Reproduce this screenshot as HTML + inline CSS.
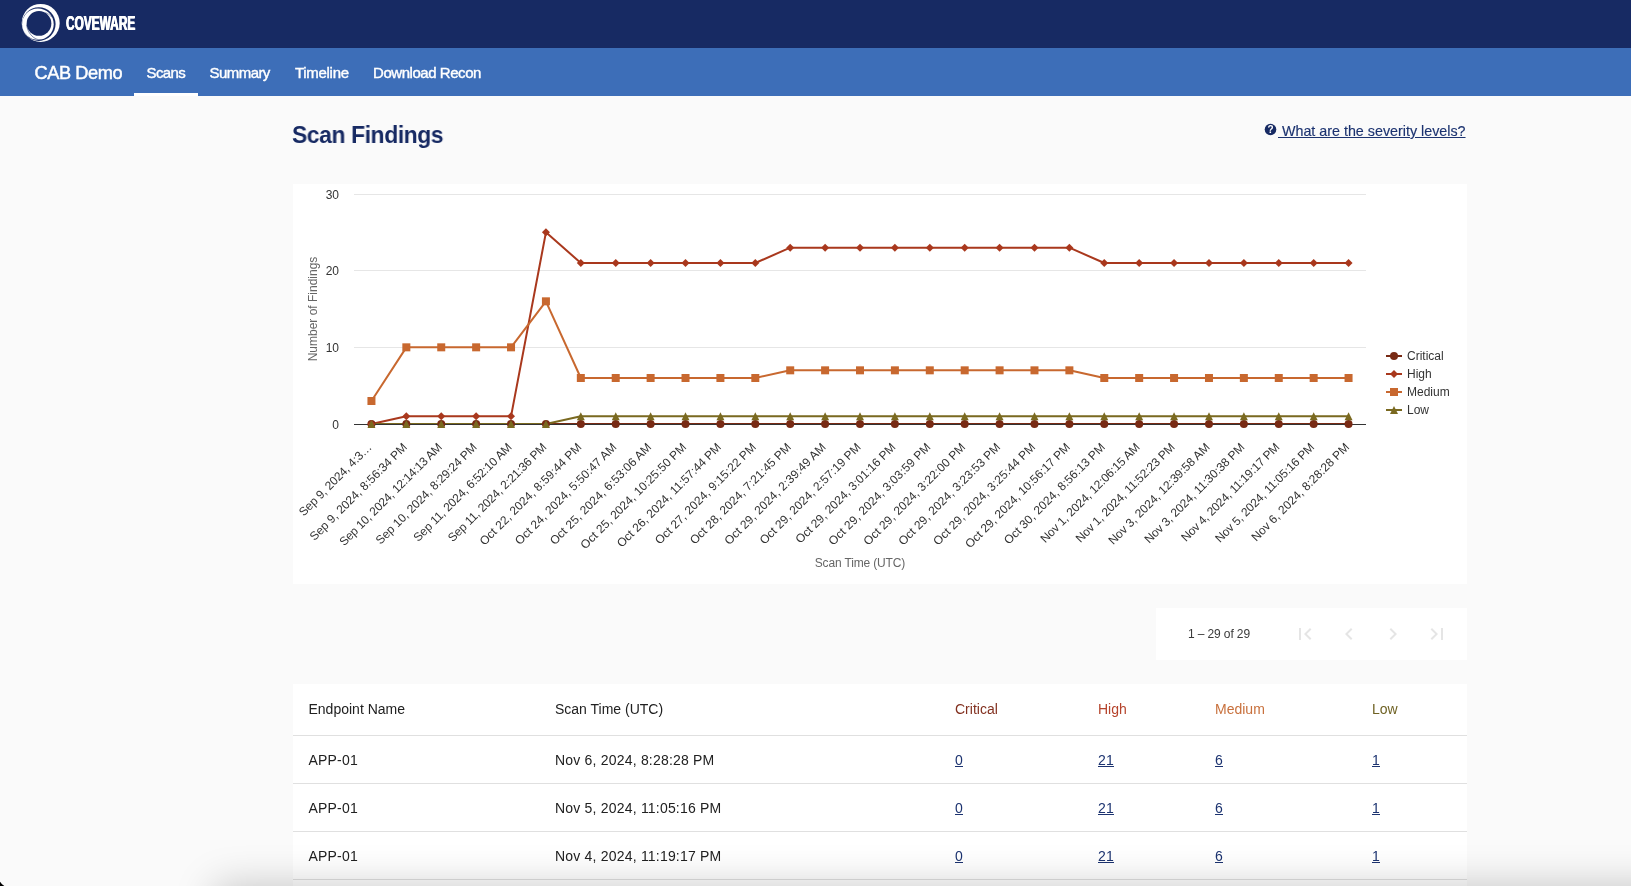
<!DOCTYPE html>
<html lang="en">
<head>
<meta charset="utf-8">
<title>Scan Findings</title>
<style>
html, body { margin: 0; padding: 0; }
body { width: 1631px; height: 886px; overflow: hidden; background: #fafafa; position: relative;
  font-family: "Liberation Sans", sans-serif; color: #212121; }
.app { position: absolute; left: 0; top: 0; width: 1631px; height: 886px; overflow: hidden; will-change: transform; transform: translateZ(0); }
.topbar { position: absolute; left: 0; top: 0; width: 1631px; height: 48px; background: #172a63; }
.logo { position: absolute; left: 0; top: 0; }
.wordmark { position: absolute; left: 65.9px; top: 14.0px; font-size: 16px; line-height: 16px; font-weight: bold; color: #fff; white-space: nowrap; transform: scale(0.742, 1.222); transform-origin: 0 0; text-shadow: 0.5px 0 0 #fff, -0.5px 0 0 #fff; }
.navbar { position: absolute; left: 0; top: 48px; width: 1631px; height: 48px; background: #3d6eb8; color: #fff; }
.navbar span { position: absolute; white-space: nowrap; }
.brand { left: 34.5px; top: 13.6px; font-size: 18.2px; line-height: 22px; letter-spacing: -0.4px; -webkit-text-stroke: 0.45px #fff; }
.tab { top: 15.8px; font-size: 15px; line-height: 18px; -webkit-text-stroke: 0.4px #fff; }
.ink { position: absolute; left: 134px; top: 45px; width: 64px; height: 3px; background: #fff; }
h1 { position: absolute; left: 292.3px; top: 119.5px; margin: 0; font-size: 23.6px; line-height: 30px; font-weight: bold; color: #172a63; white-space: nowrap; letter-spacing: -0.4px; transform: scaleX(0.969); transform-origin: 0 0; }
.help { position: absolute; left: 1264px; top: 122px; height: 18px; white-space: nowrap; font-size: 14.3px; line-height: 18px; color: #1c3370; }
.help svg { position: absolute; left: 0; top: 0.9px; }
.help a { position: absolute; left: 14px; top: 0; text-decoration: underline; white-space: pre; -webkit-text-stroke: 0.15px #1c3370; }
.chartbox { position: absolute; left: 293px; top: 184px; width: 1174px; height: 400px; background: #fff; }
.chart { position: absolute; left: 0; top: 0; font-family: "Liberation Sans", sans-serif; }
.chart text.ax { font-size: 12px; fill: #333333; }
.chart text.ttl { font-size: 12px; fill: #666666; }
.chart text.lg { font-size: 12px; fill: #333333; }
.pager { position: absolute; left: 1156px; top: 608px; width: 311px; height: 52px; background: #fff; }
.pager .rng { position: absolute; left: 32px; top: 19.3px; font-size: 12px; line-height: 14px; color: #3a3a3a; white-space: nowrap; letter-spacing: -0.12px; }
.pager svg { position: absolute; top: 14px; }
.table { position: absolute; left: 293px; top: 684px; width: 1174px; height: 210px; background: #fff; }
.th, .tr { position: absolute; left: 0; width: 1174px; border-bottom: 1px solid #e0e0e0; }
.th { top: 0; height: 51px; font-size: 14px; letter-spacing: 0; }
.tr { height: 47px; font-size: 14px; letter-spacing: 0.2px; }
.th span, .tr span { position: absolute; white-space: nowrap; line-height: 16px; }
.th span { top: 17px; }
.tr span { top: 16px; }
.c1 { left: 15.5px; } .c2 { left: 262px; } .c3 { left: 662px; } .c4 { left: 805px; } .c5 { left: 922px; } .c6 { left: 1079px; }
.tr a { color: #1c3370; text-decoration: underline; }
.shade { position: absolute; left: 215px; top: 886px; width: 1600px; height: 60px; box-shadow: 0 0 40px rgba(0,0,0,0.22); }
.corner { position: absolute; left: 0; top: 877px; width: 9px; height: 9px; background: radial-gradient(circle at 9px 0px, rgba(0,0,0,0) 9.6px, #000 10.4px); }
</style>
</head>
<body>
<div class="app">
<div class="topbar">
  <svg class="logo" width="160" height="48" viewBox="0 0 160 48">
    <circle cx="40.7" cy="22.9" r="19" fill="#fff"/>
    <circle cx="38.8" cy="24.1" r="16.8" fill="#172a63"/>
    <circle cx="37.9" cy="24.2" r="15.8" fill="#fff"/>
    <circle cx="39.0" cy="23.4" r="12.35" fill="#172a63"/>
    <path d="M26.6 24.6 C27.2 30.5 30.6 35.8 35.1 38.4 C37.2 39.5 39.3 40 41.6 40" fill="none" stroke="#172a63" stroke-width="0.55"/>
    <path d="M45.5 12.6 C48.2 13.6 50.4 15.3 52 17.4" fill="none" stroke="#172a63" stroke-width="0.45"/>
  </svg>
  <span class="wordmark">COVEWARE</span>
</div>
<div class="navbar">
  <span class="brand">CAB Demo</span>
  <span class="tab" style="left:146.5px;letter-spacing:-0.6px">Scans</span>
  <span class="tab" style="left:209.5px;letter-spacing:-0.55px">Summary</span>
  <span class="tab" style="left:295px;letter-spacing:-0.3px">Timeline</span>
  <span class="tab" style="left:373px;letter-spacing:-0.45px">Download Recon</span>
  <div class="ink"></div>
</div>
<h1>Scan Findings</h1>
<div class="help">
  <svg width="13" height="13" viewBox="0 0 13 13"><circle cx="6.5" cy="6.5" r="5.8" fill="#172a63"/><text x="6.5" y="10.1" text-anchor="middle" font-family="Liberation Sans, sans-serif" font-weight="bold" font-size="10" fill="#fff">?</text></svg>
  <a> What are the severity levels?</a>
</div>
<div class="chartbox">
<svg class="chart" width="1174" height="400" viewBox="0 0 1174 400">
<path d="M 61 163.5 L 1073 163.5" stroke="#e6e6e6" stroke-width="1" fill="none"/>
<path d="M 61 86.5 L 1073 86.5" stroke="#e6e6e6" stroke-width="1" fill="none"/>
<path d="M 61 10.5 L 1073 10.5" stroke="#e6e6e6" stroke-width="1" fill="none"/>
<path d="M 78.45 240.00 L 113.34 240.00 L 148.24 240.00 L 183.14 240.00 L 218.03 240.00 L 252.93 240.00 L 287.83 240.00 L 322.72 240.00 L 357.62 240.00 L 392.52 240.00 L 427.41 240.00 L 462.31 240.00 L 497.21 240.00 L 532.10 240.00 L 567.00 240.00 L 601.90 240.00 L 636.79 240.00 L 671.69 240.00 L 706.59 240.00 L 741.48 240.00 L 776.38 240.00 L 811.28 240.00 L 846.17 240.00 L 881.07 240.00 L 915.97 240.00 L 950.86 240.00 L 985.76 240.00 L 1020.66 240.00 L 1055.55 240.00" stroke="#782A14" stroke-width="2" fill="none" stroke-linejoin="round" stroke-linecap="round"/>
<path d="M 78.45 240.00 L 113.34 232.33 L 148.24 232.33 L 183.14 232.33 L 218.03 232.33 L 252.93 48.33 L 287.83 79.00 L 322.72 79.00 L 357.62 79.00 L 392.52 79.00 L 427.41 79.00 L 462.31 79.00 L 497.21 63.67 L 532.10 63.67 L 567.00 63.67 L 601.90 63.67 L 636.79 63.67 L 671.69 63.67 L 706.59 63.67 L 741.48 63.67 L 776.38 63.67 L 811.28 79.00 L 846.17 79.00 L 881.07 79.00 L 915.97 79.00 L 950.86 79.00 L 985.76 79.00 L 1020.66 79.00 L 1055.55 79.00" stroke="#A9381D" stroke-width="2" fill="none" stroke-linejoin="round" stroke-linecap="round"/>
<path d="M 78.45 217.00 L 113.34 163.33 L 148.24 163.33 L 183.14 163.33 L 218.03 163.33 L 252.93 117.33 L 287.83 194.00 L 322.72 194.00 L 357.62 194.00 L 392.52 194.00 L 427.41 194.00 L 462.31 194.00 L 497.21 186.33 L 532.10 186.33 L 567.00 186.33 L 601.90 186.33 L 636.79 186.33 L 671.69 186.33 L 706.59 186.33 L 741.48 186.33 L 776.38 186.33 L 811.28 194.00 L 846.17 194.00 L 881.07 194.00 L 915.97 194.00 L 950.86 194.00 L 985.76 194.00 L 1020.66 194.00 L 1055.55 194.00" stroke="#C8682F" stroke-width="2" fill="none" stroke-linejoin="round" stroke-linecap="round"/>
<path d="M 78.45 240.00 L 113.34 240.00 L 148.24 240.00 L 183.14 240.00 L 218.03 240.00 L 252.93 240.00 L 287.83 232.33 L 322.72 232.33 L 357.62 232.33 L 392.52 232.33 L 427.41 232.33 L 462.31 232.33 L 497.21 232.33 L 532.10 232.33 L 567.00 232.33 L 601.90 232.33 L 636.79 232.33 L 671.69 232.33 L 706.59 232.33 L 741.48 232.33 L 776.38 232.33 L 811.28 232.33 L 846.17 232.33 L 881.07 232.33 L 915.97 232.33 L 950.86 232.33 L 985.76 232.33 L 1020.66 232.33 L 1055.55 232.33" stroke="#7A6920" stroke-width="2" fill="none" stroke-linejoin="round" stroke-linecap="round"/>
<path d="M 61 240.5 L 1073 240.5" stroke="#333333" stroke-width="1" fill="none"/>
<g><circle cx="78.45" cy="240.00" r="4" fill="#782A14"/><circle cx="113.34" cy="240.00" r="4" fill="#782A14"/><circle cx="148.24" cy="240.00" r="4" fill="#782A14"/><circle cx="183.14" cy="240.00" r="4" fill="#782A14"/><circle cx="218.03" cy="240.00" r="4" fill="#782A14"/><circle cx="252.93" cy="240.00" r="4" fill="#782A14"/><circle cx="287.83" cy="240.00" r="4" fill="#782A14"/><circle cx="322.72" cy="240.00" r="4" fill="#782A14"/><circle cx="357.62" cy="240.00" r="4" fill="#782A14"/><circle cx="392.52" cy="240.00" r="4" fill="#782A14"/><circle cx="427.41" cy="240.00" r="4" fill="#782A14"/><circle cx="462.31" cy="240.00" r="4" fill="#782A14"/><circle cx="497.21" cy="240.00" r="4" fill="#782A14"/><circle cx="532.10" cy="240.00" r="4" fill="#782A14"/><circle cx="567.00" cy="240.00" r="4" fill="#782A14"/><circle cx="601.90" cy="240.00" r="4" fill="#782A14"/><circle cx="636.79" cy="240.00" r="4" fill="#782A14"/><circle cx="671.69" cy="240.00" r="4" fill="#782A14"/><circle cx="706.59" cy="240.00" r="4" fill="#782A14"/><circle cx="741.48" cy="240.00" r="4" fill="#782A14"/><circle cx="776.38" cy="240.00" r="4" fill="#782A14"/><circle cx="811.28" cy="240.00" r="4" fill="#782A14"/><circle cx="846.17" cy="240.00" r="4" fill="#782A14"/><circle cx="881.07" cy="240.00" r="4" fill="#782A14"/><circle cx="915.97" cy="240.00" r="4" fill="#782A14"/><circle cx="950.86" cy="240.00" r="4" fill="#782A14"/><circle cx="985.76" cy="240.00" r="4" fill="#782A14"/><circle cx="1020.66" cy="240.00" r="4" fill="#782A14"/><circle cx="1055.55" cy="240.00" r="4" fill="#782A14"/></g>
<g><path d="M 78.45 236.00 L 82.45 240.00 L 78.45 244.00 L 74.45 240.00 Z" fill="#A9381D"/><path d="M 113.34 228.33 L 117.34 232.33 L 113.34 236.33 L 109.34 232.33 Z" fill="#A9381D"/><path d="M 148.24 228.33 L 152.24 232.33 L 148.24 236.33 L 144.24 232.33 Z" fill="#A9381D"/><path d="M 183.14 228.33 L 187.14 232.33 L 183.14 236.33 L 179.14 232.33 Z" fill="#A9381D"/><path d="M 218.03 228.33 L 222.03 232.33 L 218.03 236.33 L 214.03 232.33 Z" fill="#A9381D"/><path d="M 252.93 44.33 L 256.93 48.33 L 252.93 52.33 L 248.93 48.33 Z" fill="#A9381D"/><path d="M 287.83 75.00 L 291.83 79.00 L 287.83 83.00 L 283.83 79.00 Z" fill="#A9381D"/><path d="M 322.72 75.00 L 326.72 79.00 L 322.72 83.00 L 318.72 79.00 Z" fill="#A9381D"/><path d="M 357.62 75.00 L 361.62 79.00 L 357.62 83.00 L 353.62 79.00 Z" fill="#A9381D"/><path d="M 392.52 75.00 L 396.52 79.00 L 392.52 83.00 L 388.52 79.00 Z" fill="#A9381D"/><path d="M 427.41 75.00 L 431.41 79.00 L 427.41 83.00 L 423.41 79.00 Z" fill="#A9381D"/><path d="M 462.31 75.00 L 466.31 79.00 L 462.31 83.00 L 458.31 79.00 Z" fill="#A9381D"/><path d="M 497.21 59.67 L 501.21 63.67 L 497.21 67.67 L 493.21 63.67 Z" fill="#A9381D"/><path d="M 532.10 59.67 L 536.10 63.67 L 532.10 67.67 L 528.10 63.67 Z" fill="#A9381D"/><path d="M 567.00 59.67 L 571.00 63.67 L 567.00 67.67 L 563.00 63.67 Z" fill="#A9381D"/><path d="M 601.90 59.67 L 605.90 63.67 L 601.90 67.67 L 597.90 63.67 Z" fill="#A9381D"/><path d="M 636.79 59.67 L 640.79 63.67 L 636.79 67.67 L 632.79 63.67 Z" fill="#A9381D"/><path d="M 671.69 59.67 L 675.69 63.67 L 671.69 67.67 L 667.69 63.67 Z" fill="#A9381D"/><path d="M 706.59 59.67 L 710.59 63.67 L 706.59 67.67 L 702.59 63.67 Z" fill="#A9381D"/><path d="M 741.48 59.67 L 745.48 63.67 L 741.48 67.67 L 737.48 63.67 Z" fill="#A9381D"/><path d="M 776.38 59.67 L 780.38 63.67 L 776.38 67.67 L 772.38 63.67 Z" fill="#A9381D"/><path d="M 811.28 75.00 L 815.28 79.00 L 811.28 83.00 L 807.28 79.00 Z" fill="#A9381D"/><path d="M 846.17 75.00 L 850.17 79.00 L 846.17 83.00 L 842.17 79.00 Z" fill="#A9381D"/><path d="M 881.07 75.00 L 885.07 79.00 L 881.07 83.00 L 877.07 79.00 Z" fill="#A9381D"/><path d="M 915.97 75.00 L 919.97 79.00 L 915.97 83.00 L 911.97 79.00 Z" fill="#A9381D"/><path d="M 950.86 75.00 L 954.86 79.00 L 950.86 83.00 L 946.86 79.00 Z" fill="#A9381D"/><path d="M 985.76 75.00 L 989.76 79.00 L 985.76 83.00 L 981.76 79.00 Z" fill="#A9381D"/><path d="M 1020.66 75.00 L 1024.66 79.00 L 1020.66 83.00 L 1016.66 79.00 Z" fill="#A9381D"/><path d="M 1055.55 75.00 L 1059.55 79.00 L 1055.55 83.00 L 1051.55 79.00 Z" fill="#A9381D"/></g>
<g><rect x="74.45" y="213.00" width="8" height="8" fill="#C8682F"/><rect x="109.34" y="159.33" width="8" height="8" fill="#C8682F"/><rect x="144.24" y="159.33" width="8" height="8" fill="#C8682F"/><rect x="179.14" y="159.33" width="8" height="8" fill="#C8682F"/><rect x="214.03" y="159.33" width="8" height="8" fill="#C8682F"/><rect x="248.93" y="113.33" width="8" height="8" fill="#C8682F"/><rect x="283.83" y="190.00" width="8" height="8" fill="#C8682F"/><rect x="318.72" y="190.00" width="8" height="8" fill="#C8682F"/><rect x="353.62" y="190.00" width="8" height="8" fill="#C8682F"/><rect x="388.52" y="190.00" width="8" height="8" fill="#C8682F"/><rect x="423.41" y="190.00" width="8" height="8" fill="#C8682F"/><rect x="458.31" y="190.00" width="8" height="8" fill="#C8682F"/><rect x="493.21" y="182.33" width="8" height="8" fill="#C8682F"/><rect x="528.10" y="182.33" width="8" height="8" fill="#C8682F"/><rect x="563.00" y="182.33" width="8" height="8" fill="#C8682F"/><rect x="597.90" y="182.33" width="8" height="8" fill="#C8682F"/><rect x="632.79" y="182.33" width="8" height="8" fill="#C8682F"/><rect x="667.69" y="182.33" width="8" height="8" fill="#C8682F"/><rect x="702.59" y="182.33" width="8" height="8" fill="#C8682F"/><rect x="737.48" y="182.33" width="8" height="8" fill="#C8682F"/><rect x="772.38" y="182.33" width="8" height="8" fill="#C8682F"/><rect x="807.28" y="190.00" width="8" height="8" fill="#C8682F"/><rect x="842.17" y="190.00" width="8" height="8" fill="#C8682F"/><rect x="877.07" y="190.00" width="8" height="8" fill="#C8682F"/><rect x="911.97" y="190.00" width="8" height="8" fill="#C8682F"/><rect x="946.86" y="190.00" width="8" height="8" fill="#C8682F"/><rect x="981.76" y="190.00" width="8" height="8" fill="#C8682F"/><rect x="1016.66" y="190.00" width="8" height="8" fill="#C8682F"/><rect x="1051.55" y="190.00" width="8" height="8" fill="#C8682F"/></g>
<g><path d="M 78.45 236.00 L 82.45 244.00 L 74.45 244.00 Z" fill="#7A6920"/><path d="M 113.34 236.00 L 117.34 244.00 L 109.34 244.00 Z" fill="#7A6920"/><path d="M 148.24 236.00 L 152.24 244.00 L 144.24 244.00 Z" fill="#7A6920"/><path d="M 183.14 236.00 L 187.14 244.00 L 179.14 244.00 Z" fill="#7A6920"/><path d="M 218.03 236.00 L 222.03 244.00 L 214.03 244.00 Z" fill="#7A6920"/><path d="M 252.93 236.00 L 256.93 244.00 L 248.93 244.00 Z" fill="#7A6920"/><path d="M 287.83 228.33 L 291.83 236.33 L 283.83 236.33 Z" fill="#7A6920"/><path d="M 322.72 228.33 L 326.72 236.33 L 318.72 236.33 Z" fill="#7A6920"/><path d="M 357.62 228.33 L 361.62 236.33 L 353.62 236.33 Z" fill="#7A6920"/><path d="M 392.52 228.33 L 396.52 236.33 L 388.52 236.33 Z" fill="#7A6920"/><path d="M 427.41 228.33 L 431.41 236.33 L 423.41 236.33 Z" fill="#7A6920"/><path d="M 462.31 228.33 L 466.31 236.33 L 458.31 236.33 Z" fill="#7A6920"/><path d="M 497.21 228.33 L 501.21 236.33 L 493.21 236.33 Z" fill="#7A6920"/><path d="M 532.10 228.33 L 536.10 236.33 L 528.10 236.33 Z" fill="#7A6920"/><path d="M 567.00 228.33 L 571.00 236.33 L 563.00 236.33 Z" fill="#7A6920"/><path d="M 601.90 228.33 L 605.90 236.33 L 597.90 236.33 Z" fill="#7A6920"/><path d="M 636.79 228.33 L 640.79 236.33 L 632.79 236.33 Z" fill="#7A6920"/><path d="M 671.69 228.33 L 675.69 236.33 L 667.69 236.33 Z" fill="#7A6920"/><path d="M 706.59 228.33 L 710.59 236.33 L 702.59 236.33 Z" fill="#7A6920"/><path d="M 741.48 228.33 L 745.48 236.33 L 737.48 236.33 Z" fill="#7A6920"/><path d="M 776.38 228.33 L 780.38 236.33 L 772.38 236.33 Z" fill="#7A6920"/><path d="M 811.28 228.33 L 815.28 236.33 L 807.28 236.33 Z" fill="#7A6920"/><path d="M 846.17 228.33 L 850.17 236.33 L 842.17 236.33 Z" fill="#7A6920"/><path d="M 881.07 228.33 L 885.07 236.33 L 877.07 236.33 Z" fill="#7A6920"/><path d="M 915.97 228.33 L 919.97 236.33 L 911.97 236.33 Z" fill="#7A6920"/><path d="M 950.86 228.33 L 954.86 236.33 L 946.86 236.33 Z" fill="#7A6920"/><path d="M 985.76 228.33 L 989.76 236.33 L 981.76 236.33 Z" fill="#7A6920"/><path d="M 1020.66 228.33 L 1024.66 236.33 L 1016.66 236.33 Z" fill="#7A6920"/><path d="M 1055.55 228.33 L 1059.55 236.33 L 1051.55 236.33 Z" fill="#7A6920"/></g>
<text x="46" y="244.5" text-anchor="end" class="ax">0</text>
<text x="46" y="167.8" text-anchor="end" class="ax">10</text>
<text x="46" y="91.2" text-anchor="end" class="ax">20</text>
<text x="46" y="14.5" text-anchor="end" class="ax">30</text>
<text transform="translate(24 125) rotate(-90)" text-anchor="middle" class="ttl">Number of Findings</text>
<text x="567" y="383" text-anchor="middle" textLength="90.5" lengthAdjust="spacing" class="ttl">Scan Time (UTC)</text>
<text transform="translate(79.45 264.00) rotate(-45)" text-anchor="end" textLength="97.1" lengthAdjust="spacing" class="ax">Sep 9, 2024, 4:3…</text>
<text transform="translate(114.84 264.00) rotate(-45)" text-anchor="end" textLength="132.0" lengthAdjust="spacing" class="ax">Sep 9, 2024, 8:56:34 PM</text>
<text transform="translate(149.74 264.00) rotate(-45)" text-anchor="end" textLength="139.4" lengthAdjust="spacing" class="ax">Sep 10, 2024, 12:14:13 AM</text>
<text transform="translate(184.64 264.00) rotate(-45)" text-anchor="end" textLength="137.3" lengthAdjust="spacing" class="ax">Sep 10, 2024, 8:29:24 PM</text>
<text transform="translate(219.53 264.00) rotate(-45)" text-anchor="end" textLength="133.2" lengthAdjust="spacing" class="ax">Sep 11, 2024, 6:52:10 AM</text>
<text transform="translate(254.43 264.00) rotate(-45)" text-anchor="end" textLength="133.8" lengthAdjust="spacing" class="ax">Sep 11, 2024, 2:21:36 PM</text>
<text transform="translate(289.33 264.00) rotate(-45)" text-anchor="end" textLength="138.5" lengthAdjust="spacing" class="ax">Oct 22, 2024, 8:59:44 PM</text>
<text transform="translate(324.22 264.00) rotate(-45)" text-anchor="end" textLength="137.8" lengthAdjust="spacing" class="ax">Oct 24, 2024, 5:50:47 AM</text>
<text transform="translate(359.12 264.00) rotate(-45)" text-anchor="end" textLength="137.8" lengthAdjust="spacing" class="ax">Oct 25, 2024, 6:53:06 AM</text>
<text transform="translate(394.02 264.00) rotate(-45)" text-anchor="end" textLength="143.8" lengthAdjust="spacing" class="ax">Oct 25, 2024, 10:25:50 PM</text>
<text transform="translate(428.91 264.00) rotate(-45)" text-anchor="end" textLength="141.6" lengthAdjust="spacing" class="ax">Oct 26, 2024, 11:57:44 PM</text>
<text transform="translate(463.81 264.00) rotate(-45)" text-anchor="end" textLength="137.2" lengthAdjust="spacing" class="ax">Oct 27, 2024, 9:15:22 PM</text>
<text transform="translate(498.71 264.00) rotate(-45)" text-anchor="end" textLength="137.2" lengthAdjust="spacing" class="ax">Oct 28, 2024, 7:21:45 PM</text>
<text transform="translate(533.60 264.00) rotate(-45)" text-anchor="end" textLength="137.8" lengthAdjust="spacing" class="ax">Oct 29, 2024, 2:39:49 AM</text>
<text transform="translate(568.50 264.00) rotate(-45)" text-anchor="end" textLength="137.2" lengthAdjust="spacing" class="ax">Oct 29, 2024, 2:57:19 PM</text>
<text transform="translate(603.40 264.00) rotate(-45)" text-anchor="end" textLength="135.9" lengthAdjust="spacing" class="ax">Oct 29, 2024, 3:01:16 PM</text>
<text transform="translate(638.29 264.00) rotate(-45)" text-anchor="end" textLength="138.5" lengthAdjust="spacing" class="ax">Oct 29, 2024, 3:03:59 PM</text>
<text transform="translate(673.19 264.00) rotate(-45)" text-anchor="end" textLength="138.5" lengthAdjust="spacing" class="ax">Oct 29, 2024, 3:22:00 PM</text>
<text transform="translate(708.09 264.00) rotate(-45)" text-anchor="end" textLength="138.5" lengthAdjust="spacing" class="ax">Oct 29, 2024, 3:23:53 PM</text>
<text transform="translate(742.98 264.00) rotate(-45)" text-anchor="end" textLength="138.5" lengthAdjust="spacing" class="ax">Oct 29, 2024, 3:25:44 PM</text>
<text transform="translate(777.88 264.00) rotate(-45)" text-anchor="end" textLength="142.5" lengthAdjust="spacing" class="ax">Oct 29, 2024, 10:56:17 PM</text>
<text transform="translate(812.78 264.00) rotate(-45)" text-anchor="end" textLength="137.2" lengthAdjust="spacing" class="ax">Oct 30, 2024, 8:56:13 PM</text>
<text transform="translate(847.67 264.00) rotate(-45)" text-anchor="end" textLength="134.9" lengthAdjust="spacing" class="ax">Nov 1, 2024, 12:06:15 AM</text>
<text transform="translate(882.57 264.00) rotate(-45)" text-anchor="end" textLength="134.6" lengthAdjust="spacing" class="ax">Nov 1, 2024, 11:52:23 PM</text>
<text transform="translate(917.47 264.00) rotate(-45)" text-anchor="end" textLength="137.5" lengthAdjust="spacing" class="ax">Nov 3, 2024, 12:39:58 AM</text>
<text transform="translate(952.36 264.00) rotate(-45)" text-anchor="end" textLength="135.9" lengthAdjust="spacing" class="ax">Nov 3, 2024, 11:30:38 PM</text>
<text transform="translate(987.26 264.00) rotate(-45)" text-anchor="end" textLength="133.3" lengthAdjust="spacing" class="ax">Nov 4, 2024, 11:19:17 PM</text>
<text transform="translate(1022.16 264.00) rotate(-45)" text-anchor="end" textLength="134.6" lengthAdjust="spacing" class="ax">Nov 5, 2024, 11:05:16 PM</text>
<text transform="translate(1057.05 264.00) rotate(-45)" text-anchor="end" textLength="132.8" lengthAdjust="spacing" class="ax">Nov 6, 2024, 8:28:28 PM</text>
<path d="M 1093 172 L 1109 172" stroke="#782A14" stroke-width="2"/>
<circle cx="1101.00" cy="172.00" r="4" fill="#782A14"/>
<text x="1114" y="175.6" class="lg">Critical</text>
<path d="M 1093 190 L 1109 190" stroke="#A9381D" stroke-width="2"/>
<path d="M 1101.00 186.00 L 1105.00 190.00 L 1101.00 194.00 L 1097.00 190.00 Z" fill="#A9381D"/>
<text x="1114" y="193.6" class="lg">High</text>
<path d="M 1093 208 L 1109 208" stroke="#C8682F" stroke-width="2"/>
<rect x="1097.00" y="204.00" width="8" height="8" fill="#C8682F"/>
<text x="1114" y="211.6" class="lg">Medium</text>
<path d="M 1093 226 L 1109 226" stroke="#7A6920" stroke-width="2"/>
<path d="M 1101.00 222.00 L 1105.00 230.00 L 1097.00 230.00 Z" fill="#7A6920"/>
<text x="1114" y="229.6" class="lg">Low</text>
</svg>
</div>
<div class="pager">
  <span class="rng">1 – 29 of 29</span>
  <svg style="left:137px" width="24" height="24" viewBox="0 0 24 24"><path d="M18.41 16.59L13.82 12l4.59-4.59L17 6l-6 6 6 6zM6 6h2v12H6z" fill="#e5e5e5"/></svg>
  <svg style="left:181px" width="24" height="24" viewBox="0 0 24 24"><path d="M15.41 7.41L14 6l-6 6 6 6 1.41-1.41L10.83 12z" fill="#e5e5e5"/></svg>
  <svg style="left:225px" width="24" height="24" viewBox="0 0 24 24"><path d="M10 6L8.59 7.41 13.17 12l-4.58 4.59L10 18l6-6z" fill="#e5e5e5"/></svg>
  <svg style="left:269px" width="24" height="24" viewBox="0 0 24 24"><path d="M5.59 7.41L10.18 12l-4.59 4.59L7 18l6-6-6-6zM16 6h2v12h-2z" fill="#e5e5e5"/></svg>
</div>
<div class="table">
  <div class="th"><span class="c1">Endpoint Name</span><span class="c2">Scan Time (UTC)</span><span class="c3" style="color:#82301f">Critical</span><span class="c4" style="color:#b5432b">High</span><span class="c5" style="color:#c8703c">Medium</span><span class="c6" style="color:#6f6224">Low</span></div>
<div class="tr" style="top:52px"><span class="c1">APP-01</span><span class="c2">Nov 6, 2024, 8:28:28 PM</span><span class="c3"><a>0</a></span><span class="c4"><a>21</a></span><span class="c5"><a>6</a></span><span class="c6"><a>1</a></span></div>
<div class="tr" style="top:100px"><span class="c1">APP-01</span><span class="c2">Nov 5, 2024, 11:05:16 PM</span><span class="c3"><a>0</a></span><span class="c4"><a>21</a></span><span class="c5"><a>6</a></span><span class="c6"><a>1</a></span></div>
<div class="tr" style="top:148px"><span class="c1">APP-01</span><span class="c2">Nov 4, 2024, 11:19:17 PM</span><span class="c3"><a>0</a></span><span class="c4"><a>21</a></span><span class="c5"><a>6</a></span><span class="c6"><a>1</a></span></div>
<div class="tr" style="top:196px"><span class="c1">APP-01</span><span class="c2">Nov 3, 2024, 11:30:38 PM</span><span class="c3"><a>0</a></span><span class="c4"><a>21</a></span><span class="c5"><a>6</a></span><span class="c6"><a>1</a></span></div>

</div>
<div class="shade"></div>
<div class="corner"></div>
</div>
</body>
</html>
